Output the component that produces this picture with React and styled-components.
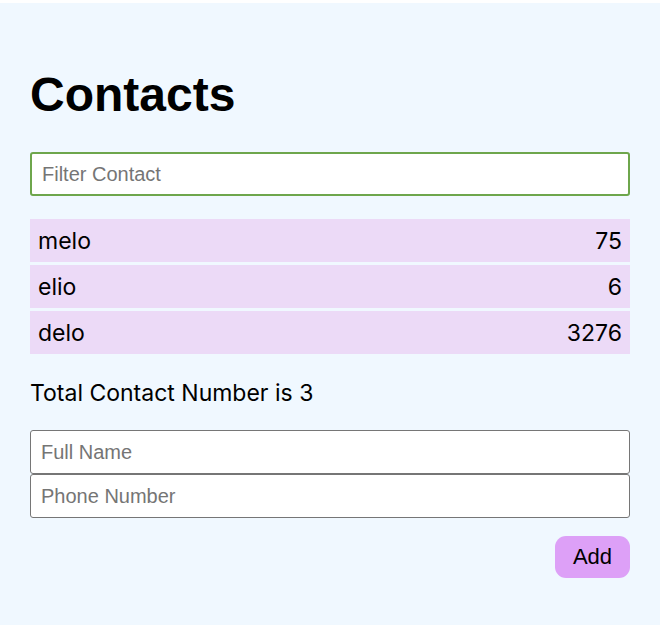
import React, { useState } from "react";
import styled, { createGlobalStyle } from "styled-components";

const Global = createGlobalStyle`
  html, body { margin: 0; padding: 0; background: #ffffff; }
  * { box-sizing: border-box; }
`;

const Panel = styled.div`
  margin-top: 3px;
  width: 660px;
  height: 622px;
  background: #f0f8ff;
  padding: 64px 30px 0 30px;
  font-family: Inter, "Noto Sans", sans-serif;
  color: #000;
`;

const Title = styled.h1`
  margin: 0 0 29px 0;
  font-family: "Liberation Sans", Arial, sans-serif;
  font-weight: 700;
  font-size: 48px;
  line-height: 56px;
`;

const Field = styled.input`
  display: block;
  width: 100%;
  height: 44px;
  margin: 0;
  padding: 0 10px;
  font-family: "Liberation Sans", Arial, sans-serif;
  font-size: 20px;
  color: #000;
  background: #fff;
  border: ${(p) => (p.$focus ? "2px solid #6ea64c" : "1px solid #767676")};
  border-radius: 3px;
  outline: none;
  &::placeholder { color: #757575; }
`;

const List = styled.div`
  display: flex;
  flex-direction: column;
  gap: 3px;
  margin: 23px 0 0 0;
`;

const Row = styled.div`
  display: flex;
  justify-content: space-between;
  align-items: center;
  height: 43px;
  padding: 1px 8px 0 8px;
  background: #ecdaf7;
  font-size: 23px;
`;

const Total = styled.p`
  margin: 25px 0 23px 0;
  font-size: 23px;
  line-height: 28px;
`;

const Form = styled.form`
  display: flex;
  flex-direction: column;
  margin: 0;
`;

const Actions = styled.div`
  display: flex;
  justify-content: flex-end;
  margin-top: 18px;
`;

const AddButton = styled.button`
  width: 75px;
  height: 42px;
  border: none;
  border-radius: 11px;
  background: #dda0f7;
  font-family: "Liberation Sans", Arial, sans-serif;
  font-size: 22px;
  color: #000;
  cursor: pointer;
`;

const contacts = [
  { name: "melo", phone: "75" },
  { name: "elio", phone: "6" },
  { name: "delo", phone: "3276" },
];

export default function App() {
  const [filter, setFilter] = useState("");
  return (
    <>
      <Global />
      <Panel>
        <Title>Contacts</Title>
        <Field
          $focus
          placeholder="Filter Contact"
          value={filter}
          onChange={(e) => setFilter(e.target.value)}
        />
        <List>
          {contacts.map((c) => (
            <Row key={c.name}>
              <span>{c.name}</span>
              <span>{c.phone}</span>
            </Row>
          ))}
        </List>
        <Total>Total Contact Number is {contacts.length}</Total>
        <Form onSubmit={(e) => e.preventDefault()}>
          <Field placeholder="Full Name" />
          <Field placeholder="Phone Number" />
          <Actions>
            <AddButton type="submit">Add</AddButton>
          </Actions>
        </Form>
      </Panel>
    </>
  );
}
